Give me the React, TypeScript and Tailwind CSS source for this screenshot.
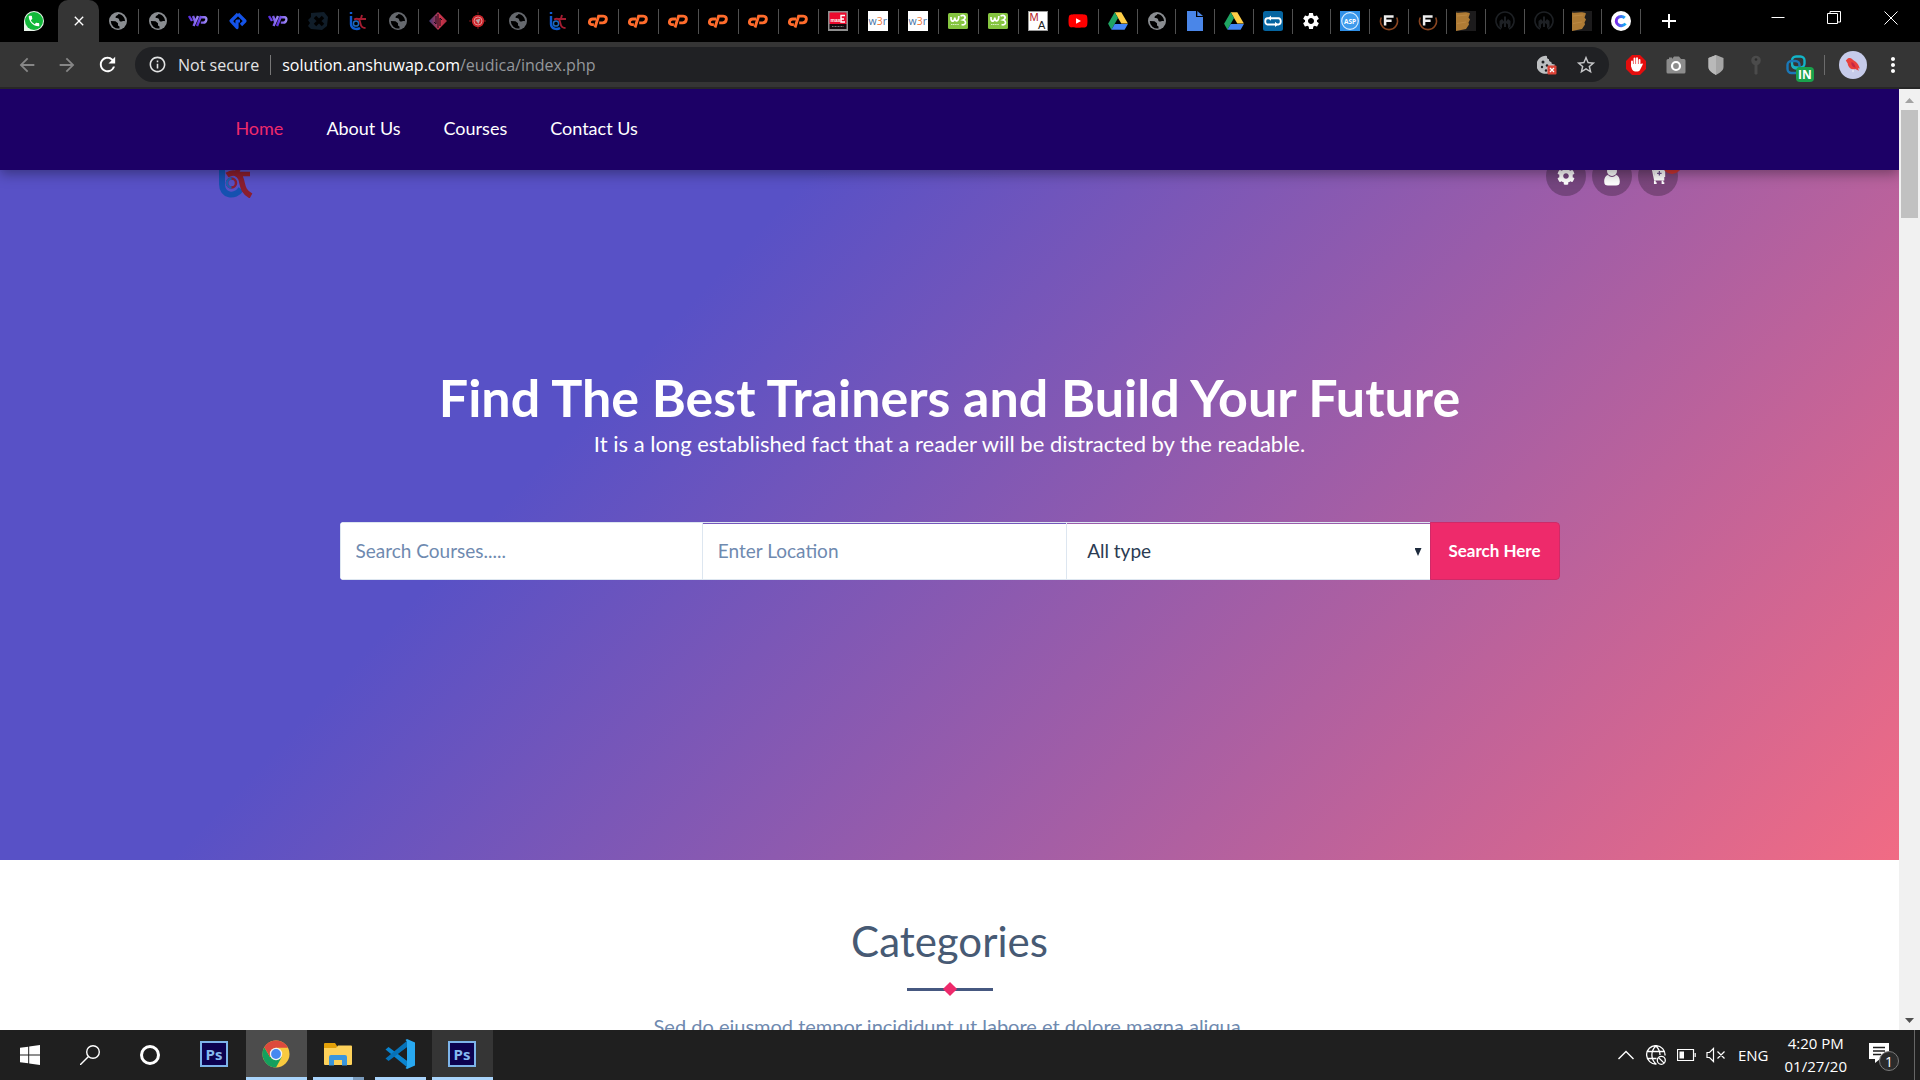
import React from "react";
import { FaYoutube, FaCog } from "react-icons/fa";
import {
  MdArrowBack,
  MdArrowForward,
  MdRefresh,
  MdInfoOutline,
  MdStarBorder,
  MdMoreVert,
  MdAdd,
  MdClose,
  MdSettings,
} from "react-icons/md";

type IconProps = { className?: string };

const box = "h-5 w-5 shrink-0";

function Globe({ className = "text-[#8a8d91]" }: IconProps) {
  return (
    <svg viewBox="0 0 20 20" className={`${box} ${className}`} aria-hidden="true">
      <circle cx="10" cy="10" r="9" fill="currentColor" />
      <path
        d="M2.800 10l4.700.3 2.500 2v2.200l1.500 1v2A7.500 7.500 0 0 1 2.800 10ZM10.500 3c-.5 1.500-3 1.600-3 3.200 0 1.300 2.300.6 3.200 1.600.9 1.100.2 2.200 1.500 2.700 1.500.5 2.800-1 4.800-.3C17 6.500 14.500 3.500 10.500 3Z"
        fill="#000"
      />
    </svg>
  );
}

function Yp() {
  return (
    <svg viewBox="0 0 20 20" className={box} aria-hidden="true">
      <defs>
        <linearGradient id="yp" x1="0" x2="1">
          <stop offset="0" stopColor="#5a2be0" />
          <stop offset="1" stopColor="#9d8bf2" />
        </linearGradient>
      </defs>
      <g fill="none" stroke="url(#yp)" strokeWidth="2.400">
        <path d="M1 5l3 5M5 5l2 5.500M10 5l-4.500 10" />
        <path d="M13 5L9 15M11.500 6.200h4.800c3.500 0 2.200 5.400-1 5.400h-2.500" />
      </g>
    </svg>
  );
}

function BlueDiamond() {
  return (
    <svg viewBox="0 0 20 20" className={box} aria-hidden="true">
      <path d="M10 3l7 7-4 4M10 3l-7 7 6 6.500V10h3" fill="none" stroke="#1453e8" strokeWidth="3.200" strokeLinejoin="round" />
    </svg>
  );
}

function DarkX() {
  return (
    <svg viewBox="0 0 20 20" className={box} aria-hidden="true">
      <path d="M3 2l13-1 4 5-1 9-5 4-11-1-3-3 2-3-2-3 3-3z" fill="#101d29" />
      <path d="M7 6l8 8M15 6l-8 8" stroke="#000" strokeWidth="3.500" />
    </svg>
  );
}

function Bt() {
  return (
    <svg viewBox="0 0 20 20" className={box} aria-hidden="true">
      <path d="M3 1v2M3 5v8c0 5 6 6 9 4" fill="none" stroke="#0f5bd0" strokeWidth="2.400" />
      <circle cx="8" cy="12.500" r="2.600" fill="none" stroke="#1c6ac0" strokeWidth="1.500" />
      <path d="M6 8.500c4-2 6 0 6.500 4 .4 3 2 4.500 5 4.500M14 4l-1.500 5M10.500 8h7.500" fill="none" stroke="#a51c30" strokeWidth="1.900" />
    </svg>
  );
}

function RedDiamond() {
  return (
    <svg viewBox="0 0 20 20" className={box} aria-hidden="true">
      <defs>
        <linearGradient id="rd" x1="0" x2="1">
          <stop offset="0" stopColor="#3f3a78" />
          <stop offset="0.600" stopColor="#d0364e" />
          <stop offset="1" stopColor="#a72a3e" />
        </linearGradient>
      </defs>
      <path d="M10 1l9 9-9 9-9-9z" fill="url(#rd)" />
      <path d="M8 5v8l-2-2M12 15V7l2 2M10 3v14" stroke="#1a0a18" fill="none" />
    </svg>
  );
}

function RedDot() {
  return (
    <svg viewBox="0 0 20 20" className={box} aria-hidden="true">
      <path d="M10 1v18M1 10h18" stroke="#7c1518" strokeWidth="1" strokeDasharray="2 1" />
      <circle cx="10" cy="10" r="6.200" fill="#c9252b" />
      <circle cx="10" cy="10" r="4" fill="none" stroke="#e88d8f" />
      <path d="M7.500 9l5-1.500L10.500 13z" fill="#b6a5a8" />
    </svg>
  );
}

function Cp() {
  return (
    <svg viewBox="0 0 20 20" className={box} aria-hidden="true">
      <g fill="none" stroke="#ff6c2c" strokeWidth="2.900">
        <path d="M8 8H4.700c-3.800 0-4.600 5.600-.8 5.600h2" />
        <path d="M7 16.500L10.600 5.100h4.700c4.700 0 3.600 6.800-.8 6.800h-3.300" />
      </g>
    </svg>
  );
}

function Maxle() {
  return (
    <svg viewBox="0 0 20 20" className={box} aria-hidden="true">
      <rect width="20" height="20" fill="#8e8e8e" />
      <rect x="1.500" y="1.500" width="17" height="11.500" rx="1" fill="#ec0a2d" />
      <rect x="1.500" y="13" width="17" height="5" fill="#15090c" />
      <text x="2.500" y="11" fontSize="5" fontWeight="700" fill="#fff" fontFamily="Liberation Sans">max</text>
      <path d="M17 4.500h-4v6.500h4M13 8h3" stroke="#fff" strokeWidth="1.400" fill="none" />
      <path d="M4 15.500h12" stroke="#777" strokeDasharray="1 .5" />
    </svg>
  );
}

function W3r() {
  return (
    <svg viewBox="0 0 20 20" className={box} aria-hidden="true">
      <rect width="20" height="20" fill="#fff" />
      <text x="0.500" y="14" fontSize="10.500" fontFamily="Open Sans" fill="#4573a7">
        w<tspan fill="#f0793b">3</tspan>r
      </text>
    </svg>
  );
}

function W3() {
  return (
    <svg viewBox="0 0 20 20" className={box} aria-hidden="true">
      <rect y="2" width="20" height="16" rx="1.500" fill="#85c440" />
      <path d="M3 6c-.3 5.500 3.500 5.500 3.800.5.2 5 4 4.500 4-1.500M12.500 5c5-2 6 2.500 2.500 4 4 .8 3 6-1.500 4.500" fill="none" stroke="#fff" strokeWidth="1.700" />
      <path d="M3 13.500h8" stroke="#d9eec3" strokeWidth="1.200" strokeDasharray="1.300 .5" />
    </svg>
  );
}

function Ma() {
  return (
    <svg viewBox="0 0 20 20" className={box} aria-hidden="true">
      <rect x="0.500" y="0.500" width="19" height="19" fill="#fff" stroke="#999" />
      <text x="1.500" y="10" fontSize="11" fontFamily="Liberation Sans" fill="#b5201f">M</text>
      <text x="10" y="17.500" fontSize="11" fontFamily="Liberation Sans" fill="#222">A</text>
    </svg>
  );
}

function Youtube() {
  return (
    <span className="relative flex h-5 w-5 items-center justify-center" aria-hidden="true">
      <span className="absolute h-2 w-2 bg-white" />
      <FaYoutube className="relative h-5 w-5 text-[#ff0000]" />
    </span>
  );
}

function Drive() {
  return (
    <svg viewBox="0 0 20 20" className={box} aria-hidden="true">
      <path d="M6.700 1.200h6.600l6.600 11.400h-6.600z" fill="#ffcf48" />
      <path d="M6.700 1.200L10 7 3.400 18.800.1 12.800z" fill="#1fa463" />
      <path d="M6.700 13h13.200l-3.300 5.800H3.400z" fill="#4386f5" />
    </svg>
  );
}

function Doc() {
  return (
    <svg viewBox="0 0 20 20" className={box} aria-hidden="true">
      <path d="M2 0h9v6h7v14H2z" fill="#4a86e8" />
      <path d="M12.300 0L18 5h-5.700z" fill="#4a86e8" />
    </svg>
  );
}

function BlueLoop() {
  return (
    <svg viewBox="0 0 20 20" className={box} aria-hidden="true">
      <rect width="20" height="20" rx="2.500" fill="#0565a1" />
      <path d="M7.500 7.200H4.500c-3 0-3 6.300 0 6.300h7.500M11 13.500h4.500c3 0 3-6.300 0-6.300H8" fill="none" stroke="#fff" strokeWidth="1.900" />
      <path d="M8 4.500L5 7.200 8 9.800zM12 10.800l3 2.700-3 2.600z" fill="#fff" />
    </svg>
  );
}

function Asp() {
  return (
    <svg viewBox="0 0 20 20" className={box} aria-hidden="true">
      <rect width="20" height="20" fill="#2f8fe6" />
      <circle cx="10" cy="10" r="8.300" fill="#3f9bec" stroke="#d5ebff" strokeWidth="1.200" />
      <text x="10" y="12.700" fontSize="6.500" fontWeight="700" textAnchor="middle" fontFamily="Open Sans" fill="#fff">ASP</text>
    </svg>
  );
}

function LetterF() {
  return (
    <svg viewBox="0 0 20 20" className={box} aria-hidden="true">
      <path d="M2.300 6.500a8.500 8.500 0 1 0 15.400 0" fill="none" stroke="#8a4520" strokeWidth="1.600" />
      <path d="M6.100 14.500V5.500h8.500M6.100 9.800h6.500" fill="none" stroke="#eee" strokeWidth="2.500" />
    </svg>
  );
}

function Wood() {
  return (
    <svg viewBox="0 0 20 20" className={box} aria-hidden="true">
      <rect width="20" height="20" fill="#1c1b1c" />
      <path d="M0 1.500c5 1 9-1.500 14 1l-1.500 4 1.500 2-1.500 3 .5 2-3 4.500L0 20z" fill="#ae7b35" />
      <path d="M1 5l10-1M1 12.500l9-1.500" stroke="#c08c45" strokeWidth="0.800" />
    </svg>
  );
}

function DarkCircle() {
  return (
    <svg viewBox="0 0 20 20" className={box} aria-hidden="true">
      <path d="M6 18a9 9 0 1 1 8 0" fill="none" stroke="#1d2024" strokeWidth="1.600" />
      <path d="M4.500 15.500V10l2.500-2 2 2.500V5.500h2v5L13 8l2.500 2v5.500L13 17.500v-4l-2-1.500v4H9v-4l-2 1.500v4z" fill="#1d2024" />
    </svg>
  );
}

function LetterC() {
  return (
    <svg viewBox="0 0 20 20" className={box} aria-hidden="true">
      <defs>
        <linearGradient id="lc" x1="0" x2="1">
          <stop offset="0" stopColor="#7a2be8" />
          <stop offset="1" stopColor="#10b5f5" />
        </linearGradient>
      </defs>
      <circle cx="10" cy="10" r="10" fill="#fff" />
      <path d="M13.800 6.800A5 4.600 0 1 0 14.500 12.500" fill="none" stroke="url(#lc)" strokeWidth="3" />
    </svg>
  );
}

const wideTabs: [string, React.ReactNode][] = [
  ["Site", <Globe />],
  ["Site", <Globe />],
  ["YP", <Yp />],
  ["Blue", <BlueDiamond />],
  ["YP", <Yp />],
  ["X", <DarkX />],
  ["BT", <Bt />],
  ["Site", <Globe className="text-[#66696e]" />],
  ["Diamond", <RedDiamond />],
  ["Dot", <RedDot />],
  ["Site", <Globe className="text-[#66696e]" />],
  ["BT", <Bt />],
  ["cPanel", <Cp />],
  ["cPanel", <Cp />],
  ["cPanel", <Cp />],
  ["cPanel", <Cp />],
  ["cPanel", <Cp />],
  ["cPanel", <Cp />],
  ["Maxle", <Maxle />],
  ["w3resource", <W3r />],
  ["w3resource", <W3r />],
  ["W3Schools", <W3 />],
  ["W3Schools", <W3 />],
  ["MA", <Ma />],
  ["YouTube", <Youtube />],
];

const narrowTabs: [string, React.ReactNode][] = [
  ["Drive", <Drive />],
  ["Site", <Globe />],
  ["Document", <Doc />],
  ["Drive", <Drive />],
  ["Loop", <BlueLoop />],
  ["Settings", <MdSettings className="h-5 w-5 text-white" />],
  ["ASP", <Asp />],
  ["F", <LetterF />],
  ["F", <LetterF />],
  ["Wood", <Wood />],
  ["Circle", <DarkCircle />],
  ["Circle", <DarkCircle />],
  ["Wood", <Wood />],
  ["C", <LetterC />],
];

function TabStrip() {
  return (
    <div className="flex h-[42px] shrink-0 items-stretch bg-black">
      <button aria-label="WhatsApp" className="flex w-[58px] items-center pl-6">
        <span className="flex h-5 w-5 items-center justify-center rounded-full rounded-bl-sm bg-[#e8f5ea]">
          <span className="flex h-[18px] w-[18px] items-center justify-center rounded-full bg-[#12b83a]">
            <svg viewBox="0 0 24 24" className="h-3.5 w-3.5" fill="#fff" aria-hidden="true">
              <path d="M6.600 10.800c1.400 2.800 3.800 5.100 6.600 6.600l2.200-2.200c.3-.3.700-.4 1-.2 1.100.4 2.300.6 3.600.6.600 0 1 .4 1 1V20c0 .6-.4 1-1 1C10.600 21 3 13.400 3 4c0-.6.5-1 1-1h3.500c.6 0 1 .4 1 1 0 1.300.2 2.500.6 3.600.1.300 0 .7-.2 1z" />
            </svg>
          </span>
        </span>
      </button>
      <div className="flex w-[41px] items-center justify-center rounded-t-[10px] bg-[#353535]">
        <button aria-label="Close tab"><MdClose className="h-4 w-4 text-white" /></button>
      </div>
      {wideTabs.map(([label, icon], i) => (
        <button key={i} aria-label={label} className="flex w-10 shrink-0 items-center">
          <span className="flex flex-1 justify-center pr-px">{icon}</span>
          <span className="h-[25px] w-px bg-[#505050]" />
        </button>
      ))}
      <div className="flex w-[542px] shrink-0">
        {narrowTabs.map(([label, icon], i) => (
          <button key={i} aria-label={label} className="flex flex-1 items-center">
            <span className="flex flex-1 justify-center">{icon}</span>
            <span className="h-[25px] w-px bg-[#505050]" />
          </button>
        ))}
      </div>
      <button aria-label="New tab" className="flex w-14 items-center justify-center text-white">
        <MdAdd className="h-6 w-6" />
      </button>
      <div className="ml-auto flex pb-1.5 text-white">
        <button aria-label="Minimize" className="flex w-14 items-center justify-center">
          <svg viewBox="0 0 14 14" className="h-3.5 w-3.5" stroke="currentColor"><path d="M0.500 6.500h13" /></svg>
        </button>
        <button aria-label="Restore" className="flex w-14 items-center justify-center">
          <svg viewBox="0 0 14 14" className="h-3.5 w-3.5" fill="none" stroke="currentColor"><path d="M.5 2.500h10v10H.5zM3 2V.5h10.500v10.500H11" /></svg>
        </button>
        <button aria-label="Close" className="flex w-[58px] items-center justify-center">
          <svg viewBox="0 0 14 14" className="h-3.5 w-3.5" stroke="currentColor"><path d="M.5.5l13 13M13.500.5l-13 13" /></svg>
        </button>
      </div>
    </div>
  );
}

function Toolbar() {
  return (
    <div className="flex h-[47px] shrink-0 items-center border-b-2 border-[#272727] bg-[#353535] font-['Open_Sans',sans-serif]">
      <div className="flex w-[135px] items-center pl-4">
        <button aria-label="Back" className="w-10 text-[#868686]"><MdArrowBack className="h-[22px] w-[22px]" /></button>
        <button aria-label="Forward" className="w-10 text-[#868686]"><MdArrowForward className="h-[22px] w-[22px]" /></button>
        <button aria-label="Reload" className="text-white"><MdRefresh className="h-[23px] w-[23px]" /></button>
      </div>
      <div className="flex h-[35px] flex-1 items-center rounded-full bg-[#202124] pl-[13px] pr-3 text-[16px] text-white">
        <MdInfoOutline className="h-[19px] w-[19px] text-[#e2e3e4]" />
        <span className="ml-[11px] text-[#e2e3e4]">Not secure</span>
        <span className="mx-[11px] h-5 w-px bg-[#777]" />
        <span>solution.anshuwap.com<span className="text-[#94979b]">/eudica/index.php</span></span>
        <button aria-label="Cookies blocked" className="ml-auto">
          <svg viewBox="0 0 20 20" className="h-5 w-5">
            <path d="M10 1a9 9 0 1 0 1 17.500V12h6.500v-3c-2 1-3.500-.5-3-2-2 0-3-1.500-2.500-3C10.500 4 9.700 2.500 10 1z" fill="#bdbfc1" />
            <g fill="#202124"><circle cx="6" cy="7" r="1.500" /><circle cx="5" cy="12" r="1.200" /><circle cx="10" cy="10.500" r="1.300" /><circle cx="9" cy="15.500" r="1.200" /></g>
            <rect x="10.500" y="10.500" width="9" height="9" rx="1" fill="#dd4337" />
            <path d="M13 13l4 4M17 13l-4 4" stroke="#fff" strokeWidth="1.300" />
          </svg>
        </button>
        <button aria-label="Bookmark this page" className="ml-[18px] text-[#c5c6c8]"><MdStarBorder className="h-[22px] w-[22px]" /></button>
      </div>
      <div className="flex items-center">
        <button aria-label="Ad blocker" className="ml-[17px]">
          <svg viewBox="0 0 20 20" className="h-5 w-5">
            <path d="M6 0h8l6 6v8l-6 6H6l-6-6V6z" fill="#e40d0d" />
            <path d="M6 11V6.500M8.500 9V3.500M11 9V3.200M13.500 10V5" stroke="#fff" strokeWidth="1.900" strokeLinecap="round" />
            <path d="M5.100 9h9.300l1.800-.5c.8 0 .8.600.4 1.300L14 15c-1 2-6 2-7.500 0-1-1.500-1.400-3-1.400-6z" fill="#fff" />
          </svg>
        </button>
        <button aria-label="Screenshot" className="ml-5">
          <svg viewBox="0 0 20 20" className="h-5 w-5">
            <path d="M2 4h1V2.500h3V4l2-2.500h5L15 4h3a1.500 1.500 0 0 1 1.500 1.500V17a1.500 1.500 0 0 1-1.500 1.500H2A1.500 1.500 0 0 1 .5 17V5.500A1.500 1.500 0 0 1 2 4z" fill="#8c8c8c" />
            <circle cx="10" cy="11" r="4" fill="#8c8c8c" stroke="#fff" strokeWidth="2.200" />
          </svg>
        </button>
        <button aria-label="Shield" className="ml-5">
          <svg viewBox="0 0 20 20" className="h-5 w-5">
            <path d="M10 0l7.500 3v9c0 4-4.500 6-7.500 8-3-2-7.500-4-7.500-8V3z" fill="#a5a5a5" />
            <path d="M10 0v20c-3-2-7.500-4-7.500-8V3z" fill="#b9b9b9" />
          </svg>
        </button>
        <button aria-label="Key" className="ml-5">
          <svg viewBox="0 0 20 20" className="h-5 w-5">
            <circle cx="10" cy="5.500" r="4.800" fill="#4b4b4b" /><circle cx="10" cy="4.500" r="1.300" fill="#2c2c2c" />
            <path d="M8.500 9h3v9.500l-1.500 1.500-1.500-1.500z" fill="#4b4b4b" />
          </svg>
        </button>
        <button aria-label="Virtual machine" className="relative ml-5">
          <svg viewBox="0 0 20 20" className="h-5 w-5" fill="none" strokeWidth="2.400">
            <rect x="6" y="1.500" width="12.500" height="11" rx="4" stroke="#12b5c8" />
            <rect x="1.500" y="6" width="12" height="12" rx="4" stroke="#1a78b8" />
            <path d="M6 8c-.5 4 1 6 5 6" stroke="#1fb0c2" strokeWidth="1.800" />
          </svg>
          <span className="absolute top-3 left-2.5 rounded-sm bg-[#1aa24c] px-0.5 text-[12px] leading-[15px] font-bold text-white">IN</span>
        </button>
        <span className="ml-[18px] h-5 w-px bg-[#6c6c6c]" />
        <button aria-label="Profile" className="ml-3.5 flex h-7 w-7 items-center justify-center rounded-full bg-[#c6cbea]">
          <svg viewBox="0 0 20 20" className="h-[18px] w-[18px]">
            <path d="M4.500 2.500C8 1 9 4 13 6.500c2 1.500 3.500 4 4.500 7.500l-2-.5 1 3-4-2c-4 1-8-1.500-8.500-6.500L2 5z" fill="#e8403c" />
            <path d="M8 7c2 0 4 2 5 6-3 0-5-2-5-6z" fill="#c42745" />
            <path d="M10 15v3" stroke="#fff" />
          </svg>
        </button>
        <button aria-label="Menu" className="mr-[15px] ml-3.5 text-white"><MdMoreVert className="h-6 w-6" /></button>
      </div>
    </div>
  );
}

function UserIcon() {
  return (
    <svg viewBox="0 0 18 20" className="h-5 w-[18px]" fill="#fff" aria-hidden="true">
      <circle cx="9" cy="5" r="5" />
      <path d="M5 9c2 2.500 6 2.500 8 0 2.500.5 3.800 3.500 3.800 6.500S15.500 19.500 13 19.500H5c-2.500 0-3.800-1-3.800-4S2.500 9.500 5 9z" />
    </svg>
  );
}

function CartIcon() {
  return (
    <svg viewBox="0 0 20 20" className="h-[18px] w-[18px]" fill="none" stroke="#fff" strokeWidth="2" aria-hidden="true">
      <path d="M1 2h3l2.500 12H17M6 12h11" />
      <path d="M5 3h13v8H6.500z" fill="#fff" stroke="none" />
      <path d="M11.500 4.500v5M9 7h5" stroke="#70508f" strokeWidth="1.400" />
      <path d="M6.500 15v3h2M15 15v3h2" />
    </svg>
  );
}

const navItems = ["Home", "About Us", "Courses", "Contact Us"];

function SiteHeader() {
  return (
    <header className="relative z-10 shrink-0 bg-[#1c0066] shadow-[0_4px_12px_rgba(0,0,0,0.35)]">
      <nav className="mx-auto flex h-[81px] w-[77%] items-center gap-[43px] pb-0.5 pl-[17px] text-[18px]">
        {navItems.map((item) => (
          <a key={item} href="#" className={item === "Home" ? "text-[#ee2a6b]" : "text-white"}>
            {item}
          </a>
        ))}
      </nav>
    </header>
  );
}

function Hero() {
  const round = "relative flex h-10 w-10 items-center justify-center rounded-full bg-black/25 text-white";
  const field = "w-full min-w-0 border-y border-[#dde6f0] bg-white";
  return (
    <section className="flex h-[690px] shrink-0 flex-col bg-[linear-gradient(133deg,#5851c6_0%,#5851c6_32%,#f16b84_100%)]">
      <div className="mx-auto -mt-4 flex w-[77%] items-end justify-between">
        <a href="#" aria-label="Home page">
          <svg viewBox="0 0 36 44" className="h-11 w-9" fill="none">
            <path d="M4 0v30c0 12 13 14 19 5" stroke="#1551b0" strokeWidth="6" />
            <circle cx="13.500" cy="29" r="4.500" stroke="#8a1f35" strokeWidth="2.500" />
            <path d="M13.500 24.500a4.500 4.500 0 0 0 0 9" stroke="#1b60b5" strokeWidth="2.500" />
            <path d="M9 21c6-4 12-2 14 4s1 12 10 17" stroke="#8b1e2d" strokeWidth="5.500" />
            <path d="M23 10l-4 8 4 6M20 20h12" stroke="#8b1e2d" strokeWidth="4.500" />
          </svg>
        </a>
        <div className="flex gap-1.5 pb-0.5 pr-[3px]">
          <button aria-label="Settings" className={round}><FaCog className="h-[18px] w-[18px]" /></button>
          <button aria-label="Account" className={round}><UserIcon /></button>
          <button aria-label="Cart" className={round}>
            <CartIcon />
            <span className="absolute -top-0.5 -right-1 h-5 w-5 rounded-full bg-[#cf3432]" />
          </button>
        </div>
      </div>
      <div className="mx-auto mt-[169px] w-[65%] max-w-[1220px] text-center text-white">
        <h1 className="text-[52px] leading-[60px] font-bold">Find The Best Trainers and Build Your Future</h1>
        <p className="text-[22px] leading-[34px]">It is a long established fact that a reader will be distracted by the readable.</p>
        <form
          className="mt-[61px] grid h-[58px] grid-cols-[1fr_1fr_1fr_130px] overflow-hidden rounded text-left text-[19px]"
          onSubmit={(e) => e.preventDefault()}
        >
          <input aria-label="Search courses" placeholder="Search Courses....." className={`${field} border-x px-[15px] placeholder:text-[#6f8ab0]`} />
          <input aria-label="Location" placeholder="Enter Location" className={`${field} px-[15px] shadow-[inset_0_1px_0_#7557bb] placeholder:text-[#6f8ab0]`} />
          <div className="relative flex min-w-0">
            <select aria-label="Course type" className={`${field} appearance-none border-l pl-5 text-[#2b3b52] shadow-[inset_0_1px_0_#9a5dab]`}>
              <option>All type</option>
            </select>
            <span className="pointer-events-none absolute top-[26px] right-2 h-2 w-[7px] bg-[#1d2a3d] [clip-path:polygon(0_0,100%_0,50%_100%)]" />
          </div>
          <button className="rounded-r border border-[#cf2a68] bg-[#ee2a6b] text-[17px] font-bold text-white">Search Here</button>
        </form>
      </div>
    </section>
  );
}

function Categories() {
  return (
    <section className="shrink-0 bg-white pt-[51px] text-center">
      <h2 className="text-[42px] leading-[60px] text-[#475a74]">Categories</h2>
      <div className="mx-auto mt-2.5 flex h-4 w-[86px] items-center justify-center bg-[linear-gradient(#465880,#465880)] bg-[length:100%_3px] bg-center bg-no-repeat">
        <span className="h-2.5 w-2.5 rotate-45 bg-[#ee2a6b]" />
      </div>
      <p className="mt-3.5 text-[20px] leading-[30px] text-[#6f8ab0]">Sed do eiusmod tempor incididunt ut labore et dolore magna aliqua.</p>
    </section>
  );
}

function Scrollbar() {
  return (
    <div className="flex w-[21px] shrink-0 flex-col items-center justify-between bg-[#f1f1f1]">
      <div className="flex flex-col items-center">
        <span className="mt-[9px] h-[5px] w-[9px] bg-[#a3a3a3] [clip-path:polygon(50%_0,100%_100%,0_100%)]" />
        <span className="mt-[7px] h-[108px] w-[17px] bg-[#c1c1c1]" />
      </div>
      <span className="mb-[7px] h-[5px] w-[9px] bg-[#505050] [clip-path:polygon(0_0,100%_0,50%_100%)]" />
    </div>
  );
}

function Photoshop() {
  return (
    <svg viewBox="0 0 28 26" className="h-[26px] w-7" aria-hidden="true">
      <rect x="1" y="1" width="26" height="24" fill="#0c0250" stroke="#7db4ea" strokeWidth="2" />
      <text x="14" y="18.500" textAnchor="middle" fontSize="15" fontWeight="700" fontFamily="Open Sans" fill="#86b9ef">Ps</text>
    </svg>
  );
}

function Chrome() {
  return (
    <svg viewBox="0 0 28 28" className="h-7 w-7" aria-hidden="true">
      <circle cx="14" cy="14" r="13.500" fill="#f9ca3f" />
      <path d="M2.300 7.250A13.500 13.500 0 0 0 14 27.500L19.600 17.300 8 17z" fill="#14a05e" />
      <path d="M2.300 7.250A13.500 13.500 0 0 1 25.900 7.750H14L8 17z" fill="#dc4a3d" />
      <circle cx="14" cy="14" r="6.200" fill="#f4f4f4" />
      <circle cx="14" cy="14" r="4.900" fill="#4688f1" />
    </svg>
  );
}

function Explorer() {
  return (
    <svg viewBox="0 0 28 24" className="h-6 w-7" aria-hidden="true">
      <path d="M0 2a1 1 0 0 1 1-1h10l2 3v3H0z" fill="#e3a008" />
      <path d="M0 6h12l2-2.500h13a1 1 0 0 1 1 1V22a1 1 0 0 1-1 1H1a1 1 0 0 1-1-1z" fill="#fdd15a" />
      <path d="M5 23.500V15a2 2 0 0 1 2-2h14a2 2 0 0 1 2 2v8.500h-5V18h-8v5.500z" fill="#3a96dd" />
    </svg>
  );
}

function Code() {
  return (
    <svg viewBox="0 0 30 30" className="h-[30px] w-[30px]" aria-hidden="true">
      <path d="M0.500 10.500L3.500 8 23 22.500V29z" fill="#0a84cf" />
      <path d="M0.500 19.500L3.500 22 23 7.500V1z" fill="#0672b8" />
      <path d="M22 0l8 3.500v23L22 30l-1.500-1 1.500-1.500V2.500L20.500 1z" fill="#28a8f0" />
      <path d="M22 8.500v13L13.500 15z" fill="#1f1f1f" />
    </svg>
  );
}

const apps = [
  { name: "Photoshop", icon: <Photoshop />, tile: "bg-transparent", bar: "w-0" },
  { name: "Chrome", icon: <Chrome />, tile: "bg-[#4c4c4c]", bar: "w-full" },
  { name: "File Explorer", icon: <Explorer />, tile: "bg-transparent", bar: "w-[51px] border-r-[11px] border-[#7b9cbd]" },
  { name: "Visual Studio Code", icon: <Code />, tile: "bg-transparent", bar: "w-[51px]" },
  { name: "Photoshop window", icon: <Photoshop />, tile: "bg-[#353535]", bar: "w-full" },
];

function Taskbar() {
  return (
    <footer className="flex h-[50px] shrink-0 items-stretch bg-[#1f1f1f] font-['Open_Sans',sans-serif] text-[15px] text-white">
      <button aria-label="Start" className="flex w-[60px] items-center justify-center">
        <svg viewBox="0 0 20 20" className="h-5 w-5" fill="#fff"><path d="M0 2.800l8.200-1.100v7.700H0zM9.200 1.500L20 0v9.400H9.200zM0 10.500h8.200v7.800L0 17.200zM9.200 10.500H20V20L9.200 18.500z" /></svg>
      </button>
      <button aria-label="Search" className="flex w-[60px] items-center justify-center">
        <svg viewBox="0 0 20 20" className="h-5 w-5" fill="none" stroke="#fff" strokeWidth="1.400"><circle cx="13" cy="7" r="6.300" /><path d="M8.500 11.500L0 20" /></svg>
      </button>
      <button aria-label="Cortana" className="mr-1 flex w-[60px] items-center justify-center">
        <span className="h-5 w-5 rounded-full border-[3px] border-white" />
      </button>
      <div className="flex gap-px">
        {apps.map((app) => (
          <button key={app.name} aria-label={app.name} className={`flex w-[61px] flex-col items-center ${app.tile}`}>
            <span className="flex flex-1 items-center pt-px pr-0.5">{app.icon}</span>
            <span className={`h-[3px] bg-[#a9d4fb] ${app.bar}`} />
          </button>
        ))}
      </div>
      <div className="ml-auto flex items-center">
        <svg viewBox="0 0 16 10" className="h-2.5 w-4" fill="none" stroke="#fff" strokeWidth="1.400" aria-hidden="true"><path d="M.5 9L8 1.500 15.500 9" /></svg>
        <svg viewBox="0 0 20 20" className="ml-3 h-5 w-5" fill="none" stroke="#fff" strokeWidth="1.300" aria-hidden="true">
          <path d="M10.500 19A9.200 9.200 0 1 1 19 10.500M10 1c-5.500 5-5.500 13 0 18M10 1c3 3 4 6 4 9M1.500 6.500h17M1.500 13.500h9" />
          <circle cx="15.300" cy="15.300" r="4" /><path d="M12.500 12.500l5.600 5.600" />
        </svg>
        <svg viewBox="0 0 19 12" className="ml-[11px] h-3 w-[19px]" fill="none" stroke="#fff" aria-hidden="true">
          <path d="M.5.500h16v11H.5zM18.200 4v4" strokeWidth="1.200" /><rect x="2.500" y="2.500" width="4.500" height="7" fill="#fff" stroke="none" />
        </svg>
        <svg viewBox="0 0 20 16" className="ml-2.5 h-4 w-5" fill="none" stroke="#fff" strokeWidth="1.200" aria-hidden="true">
          <path d="M1 5.500h2.500L7.500 1.500v13L3.500 10.500H1zM11.500 4.500l7 7M18.500 4.500l-7 7" />
        </svg>
        <span className="ml-3">ENG</span>
        <div className="ml-4 text-center leading-[23px]"><div>4:20 PM</div><div>01/27/20</div></div>
        <button aria-label="1 notification" className="relative ml-[22px] h-8 w-[30px]">
          <svg viewBox="0 0 20 20" className="absolute top-1 left-0 h-5 w-5"><path d="M0 0h20v16h-9l-5 4v-4H0z" fill="#fff" /><path d="M4 4.500h12M4 8h12M4 11.500h8" stroke="#1f1f1f" strokeWidth="1.300" /></svg>
          <span className="absolute top-3 left-2.5 flex h-5 w-5 items-center justify-center rounded-full border border-[#7a7a7a] bg-[#2b2b2b] text-[14px]">1</span>
        </button>
        <span className="mr-[5px] ml-[15px] h-[50px] w-px bg-[#666]" />
      </div>
    </footer>
  );
}

export default function App() {
  return (
    <div className="flex h-screen flex-col overflow-hidden bg-white">
      <TabStrip />
      <Toolbar />
      <div className="flex min-h-0 flex-1">
        <main className="flex min-w-0 flex-1 flex-col overflow-hidden font-['Lato',sans-serif]">
          <SiteHeader />
          <Hero />
          <Categories />
        </main>
        <Scrollbar />
      </div>
      <Taskbar />
    </div>
  );
}
